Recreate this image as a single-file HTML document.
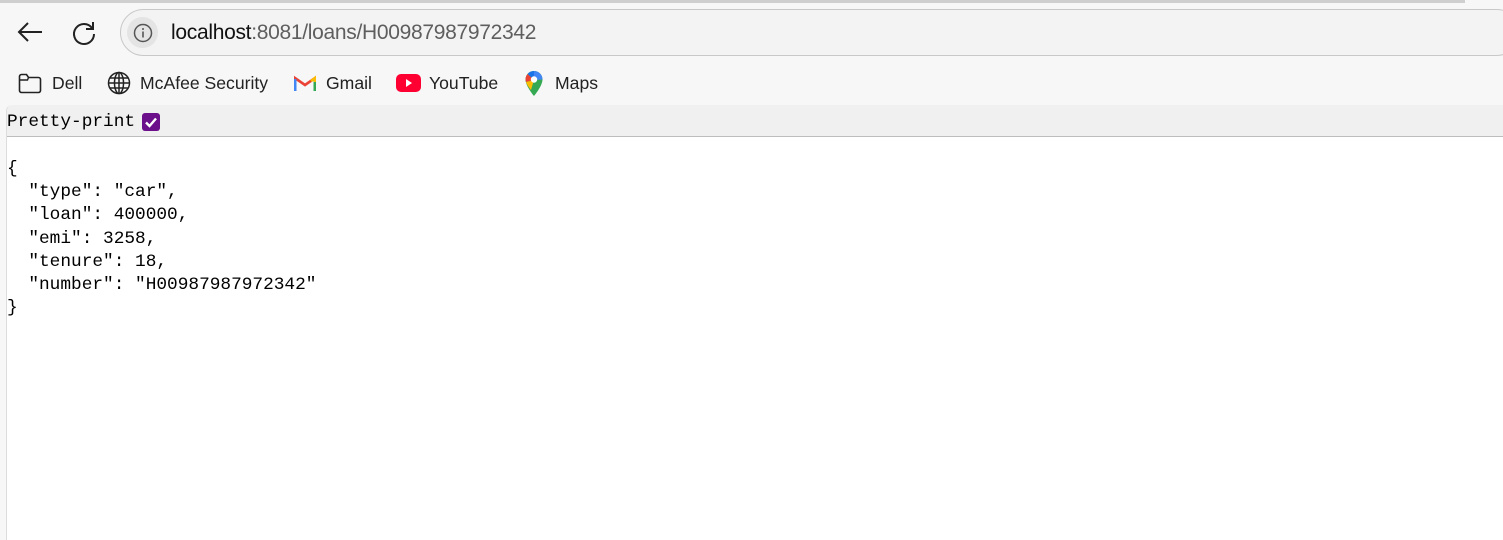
<!DOCTYPE html>
<html><head><meta charset="utf-8"><style>
*{margin:0;padding:0;box-sizing:border-box}
body{width:1503px;height:540px;overflow:hidden;background:#f7f7f7;font-family:"Liberation Sans",sans-serif;position:relative}
.topstrip{position:absolute;left:0;top:0;width:1465px;height:3px;background:#cfcfcf}
.addr{position:absolute;left:120px;top:9px;width:1400px;height:47px;border:1px solid #c8c8c8;border-radius:24px;background:#f3f3f3}
.info{position:absolute;left:127px;top:17px;width:31px;height:31px;border-radius:50%;background:#e4e4e4}
.url{position:absolute;left:171px;top:21px;font-size:21px;color:#5e5e5e;letter-spacing:-0.3px}
.url b{font-weight:normal;color:#111}
.bm{position:absolute;top:73px;font-size:17.6px;color:#222}
.page{position:absolute;left:6px;top:105px;right:0;bottom:0;background:#fff;border-left:1px solid #ddd;border-top-left-radius:6px}
.bar{position:absolute;left:0;top:0;right:0;height:32px;background:#f0f0f0;border-bottom:1px solid #bdbdbd;border-top-left-radius:6px}
.pp{position:absolute;left:0;top:7px;font-family:"Liberation Mono",monospace;font-size:17.8px;color:#000}
.cb{position:absolute;left:135px;top:8px;width:18px;height:18px;background:#6b0f8a;border-radius:3px}
pre{position:absolute;left:0;top:53px;font-family:"Liberation Mono",monospace;font-size:17.8px;line-height:23.2px;color:#000}
</style></head><body>
<div class="topstrip"></div>
<svg style="position:absolute;left:16px;top:20px" width="28" height="24" viewBox="0 0 28 24"><path d="M26 12H3M12 3L3 12l9 9" fill="none" stroke="#222" stroke-width="2"/></svg>
<svg style="position:absolute;left:70px;top:19px" width="28" height="28" viewBox="0 0 28 28"><path d="M22 9A10 10 0 1 0 24 15" fill="none" stroke="#222" stroke-width="2"/><path d="M23 3v7h-7" fill="none" stroke="#222" stroke-width="2"/></svg>
<div class="addr"></div>
<div class="info"></div>
<svg style="position:absolute;left:133px;top:23px" width="20" height="20" viewBox="0 0 20 20"><circle cx="10" cy="10" r="8.5" fill="none" stroke="#555" stroke-width="1.5"/><path d="M10 8.5v6" stroke="#555" stroke-width="1.6"/><circle cx="10" cy="6" r="1" fill="#555"/></svg>
<div class="url"><b>localhost</b>:8081/loans/H00987987972342</div>

<svg style="position:absolute;left:18px;top:72px" width="24" height="22" viewBox="0 0 24 22"><path d="M1.5 4.5a2 2 0 0 1 2-2h5l2 3h10a2 2 0 0 1 2 2v11a2 2 0 0 1-2 2h-17a2 2 0 0 1-2-2z" fill="none" stroke="#222" stroke-width="1.6"/><path d="M1.5 8h8l1-2.5" fill="none" stroke="#222" stroke-width="1.4"/></svg>
<div class="bm" style="left:52px">Dell</div>
<svg style="position:absolute;left:107px;top:71px" width="24" height="24" viewBox="0 0 24 24" fill="none" stroke="#222" stroke-width="1.5"><circle cx="12" cy="12" r="10.5"/><ellipse cx="12" cy="12" rx="4.5" ry="10.5"/><path d="M1.5 12h21M3 7h18M3 17h18M12 1.5v21"/></svg>
<div class="bm" style="left:140px">McAfee Security</div>
<svg style="position:absolute;left:294px;top:75px" width="22" height="17" viewBox="0 0 22 17"><path d="M1 16V3l10 7 10-7v13" fill="none" stroke="#ea4335" stroke-width="2.6"/><path d="M1 16V4" stroke="#4285f4" stroke-width="3"/><path d="M21 16V4" stroke="#34a853" stroke-width="3"/><path d="M17 6l4-3v4" stroke="#fbbc04" stroke-width="2.6" fill="none"/></svg>
<div class="bm" style="left:326px">Gmail</div>
<div style="position:absolute;left:396px;top:74px;width:25px;height:18px;background:#ff0033;border-radius:5px"></div>
<svg style="position:absolute;left:396px;top:74px" width="25" height="18"><path d="M10 5l6 4-6 4z" fill="#fff"/></svg>
<div class="bm" style="left:429px">YouTube</div>
<svg style="position:absolute;left:524px;top:70px" width="20" height="27" viewBox="0 0 20 27"><path d="M10 1a8.5 8.5 0 0 0-8.5 8.5C1.5 16 10 26 10 26s8.5-10 8.5-16.5A8.5 8.5 0 0 0 10 1z" fill="#34a853"/><path d="M10 1a8.5 8.5 0 0 0-6.5 3L10 10z" fill="#1a73e8"/><path d="M3.5 4A8.5 8.5 0 0 0 2 12l8-2z" fill="#ea4335"/><path d="M10 1a8.5 8.5 0 0 1 8.5 8.5L10 10z" fill="#4285f4"/><path d="M2 12c1 3 4 7 5 8l3-10z" fill="#fbbc04"/><circle cx="10" cy="9.5" r="3.2" fill="#fff"/></svg>
<div class="bm" style="left:555px">Maps</div>

<div class="page">
<div class="bar"><div class="pp">Pretty-print</div><div class="cb"></div>
<svg style="position:absolute;left:135px;top:8px" width="18" height="18"><path d="M4 9.5l3.5 3.5L14 5.5" fill="none" stroke="#fff" stroke-width="2.4"/></svg></div>
<pre>{
  "type": "car",
  "loan": 400000,
  "emi": 3258,
  "tenure": 18,
  "number": "H00987987972342"
}</pre>
</div>
</body></html>
